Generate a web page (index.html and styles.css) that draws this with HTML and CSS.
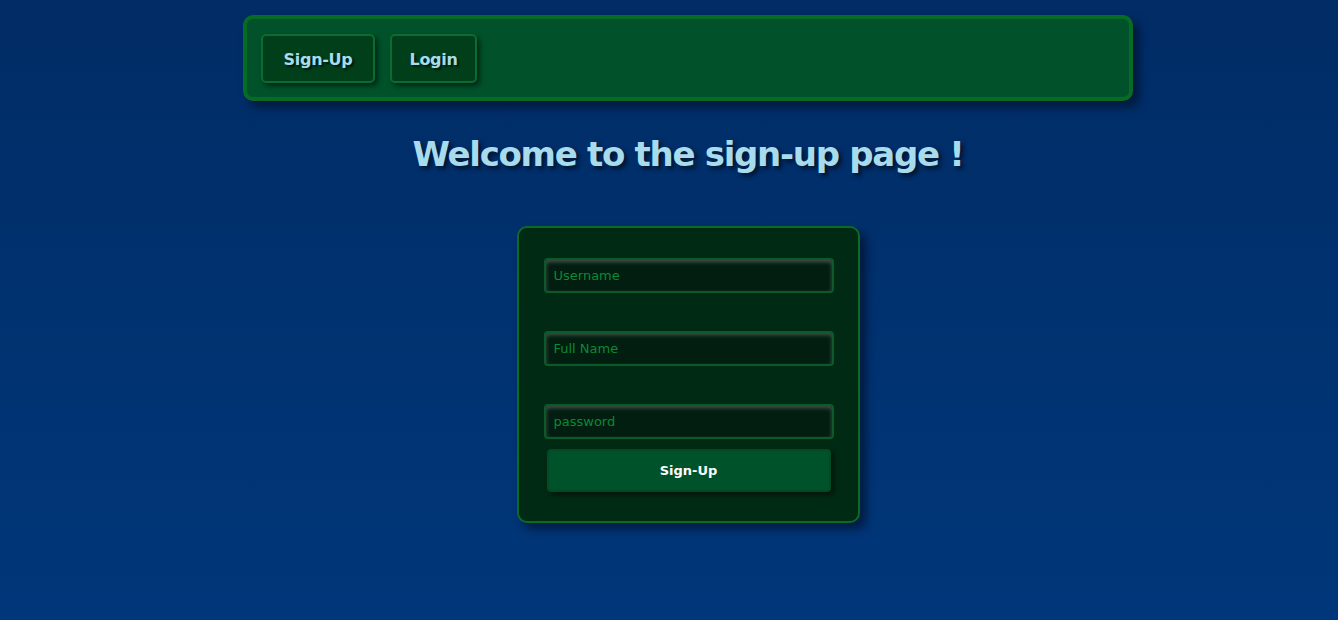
FILE: index.html
```html
<!DOCTYPE html>
<html>
<head>
<meta charset="utf-8">
<link rel="stylesheet" href="styles.css">
</head>
<body>
<div class="page">
  <nav class="navbar">
    <button class="nav-btn nav-signup">Sign-Up</button>
    <button class="nav-btn nav-login">Login</button>
  </nav>
  <h1 class="title">Welcome to the sign-up page !</h1>
  <form class="card">
    <input class="field" type="text" placeholder="Username">
    <input class="field" type="text" placeholder="Full Name">
    <input class="field" type="password" placeholder="password">
    <button class="submit" type="button">Sign-Up</button>
  </form>
</div>
</body>
</html>
```

FILE: styles.css
```css
html, body {
  margin: 0;
  height: 100%;
}
body {
  background: linear-gradient(to bottom, #012c65, #00377a);
  font-family: "Comic Sans MS", "DejaVu Sans", sans-serif;
}
.page {
  padding-left: 38px;
  padding-top: 15px;
  display: flex;
  flex-direction: column;
  align-items: center;
}
.navbar {
  box-sizing: border-box;
  width: 890px;
  height: 86px;
  background: #01522a;
  border: 4px solid #066b25;
  border-radius: 10px;
  padding: 15px 14px;
  display: flex;
  gap: 15px;
  box-shadow: 6px 6px 10px rgba(0, 10, 30, 0.6);
}
.nav-btn {
  box-sizing: border-box;
  height: 49px;
  padding: 2px 0 0;
  background: #003f1a;
  border: 2px solid #0b6b32;
  border-radius: 5px;
  color: #a6dcec;
  font-family: inherit;
  font-weight: bold;
  font-size: 16px;
  letter-spacing: -0.3px;
  text-shadow: 2px 2px 2px #001a0a;
  box-shadow: 3px 3px 5px rgba(0, 0, 0, 0.5);
}
.nav-signup {
  width: 114px;
}
.nav-login {
  width: 87px;
}
.title {
  margin: 28px 0 0;
  height: 97px;
  font-size: 34px;
  letter-spacing: -1.3px;
  line-height: 50px;
  color: #a8dcec;
  text-shadow: 3px 3px 4px #001430;
}
.card {
  box-sizing: border-box;
  width: 343px;
  height: 297px;
  background: #012a14;
  border: 2px solid #0b6b25;
  border-radius: 10px;
  padding: 30px 24px 29px 25px;
  display: flex;
  flex-direction: column;
  box-shadow: 6px 6px 10px rgba(0, 10, 30, 0.6);
}
.field {
  box-sizing: border-box;
  height: 35px;
  width: 290px;
  margin-bottom: 38px;
  background: #011e10;
  border: 2px solid #0b5a2a;
  border-radius: 4px;
  padding: 0 8px;
  font-family: inherit;
  font-size: 13px;
  color: #0a8a35;
  box-shadow: inset 0 2px 4px rgba(120, 120, 120, 0.6);
  outline: none;
}
.field:last-of-type {
  margin-bottom: 10px;
}
.field::placeholder {
  color: #0a8a35;
}
.submit {
  box-sizing: border-box;
  margin: 0 3px;
  height: 43px;
  background: #00522a;
  border: 2px solid #014a24;
  border-radius: 4px;
  color: #ffffff;
  font-family: inherit;
  font-weight: bold;
  font-size: 13px;
  box-shadow: 3px 3px 5px rgba(0, 0, 0, 0.5);
}
```
